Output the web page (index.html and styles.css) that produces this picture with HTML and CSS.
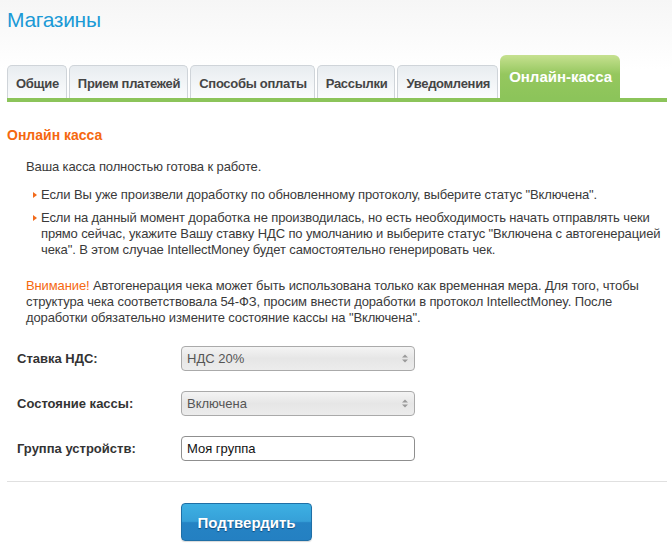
FILE: index.html
```html
<!DOCTYPE html>
<html lang="ru">
<head>
<meta charset="utf-8">
<title>Магазины</title>
<link rel="stylesheet" href="styles.css">
</head>
<body>
<div class="page">
  <h1 class="title">Магазины</h1>
  <ul class="tabs">
    <li class="tab">Общие</li>
    <li class="tab">Прием платежей</li>
    <li class="tab">Способы оплаты</li>
    <li class="tab">Рассылки</li>
    <li class="tab">Уведомления</li>
    <li class="tab active">Онлайн-касса</li>
  </ul>
  <h2 class="section-title">Онлайн касса</h2>
  <div class="intro">
    <p class="ready">Ваша касса полностью готова к работе.</p>
    <ul class="bullets">
      <li>Если Вы уже произвели доработку по обновленному протоколу, выберите статус "Включена".</li>
      <li>Если на данный момент доработка не производилась, но есть необходимость начать отправлять чеки прямо сейчас, укажите Вашу ставку НДС по умолчанию и выберите статус "Включена с автогенерацией чека". В этом случае IntellectMoney будет самостоятельно генерировать чек.</li>
    </ul>
    <p class="warning"><span class="attention">Внимание!</span> Автогенерация чека может быть использована только как временная мера. Для того, чтобы структура чека соответствовала 54-ФЗ, просим внести доработки в протокол IntellectMoney. После доработки обязательно измените состояние кассы на "Включена".</p>
  </div>
  <form class="form">
    <div class="row">
      <label class="label">Ставка НДС:</label>
      <div class="select-wrap">
        <select class="select"><option>НДС 20%</option></select>
        <svg class="arrows" width="6" height="9" viewBox="0 0 6 9"><path d="M0 3.5 L3 0.5 L6 3.5Z M0 5.5 L3 8.5 L6 5.5Z" fill="#9a9a9a"/></svg>
      </div>
    </div>
    <div class="row">
      <label class="label">Состояние кассы:</label>
      <div class="select-wrap">
        <select class="select"><option>Включена</option></select>
        <svg class="arrows" width="6" height="9" viewBox="0 0 6 9"><path d="M0 3.5 L3 0.5 L6 3.5Z M0 5.5 L3 8.5 L6 5.5Z" fill="#9a9a9a"/></svg>
      </div>
    </div>
    <div class="row">
      <label class="label">Группа устройств:</label>
      <input class="input" type="text" value="Моя группа">
    </div>
    <hr class="divider">
    <div class="actions">
      <button type="button" class="btn">Подтвердить</button>
    </div>
  </form>
</div>
</body>
</html>
```

FILE: styles.css
```css
html, body {
  margin: 0;
  padding: 0;
}
body {
  font-family: "Liberation Sans", Arial, sans-serif;
  font-size: 13px;
  color: #3a3a3a;
  background: linear-gradient(#f6f6f6, #ffffff 70px);
  min-height: 556px;
}
.page {
  padding: 0 5px 0 7px;
}
.title {
  margin: 8px 0 0;
  font-size: 21px;
  line-height: 24px;
  font-weight: normal;
  color: #1b9ad6;
  letter-spacing: -0.3px;
}
.tabs {
  list-style: none;
  margin: 23px 0 0;
  padding: 0;
  display: flex;
  align-items: flex-end;
  gap: 2px;
  border-bottom: 4px solid #8cc45a;
}
.tab {
  font-size: 13px;
  line-height: 15px;
  font-weight: bold;
  color: #454545;
  letter-spacing: -0.3px;
  padding: 10px 7px 7px 8px;
  border: 1px solid #cfd4d9;
  border-bottom: none;
  border-radius: 5px 5px 0 0;
  background: linear-gradient(#e8ecf0, #fbfcfd);
}
.tab.active {
  font-size: 15px;
  line-height: 17px;
  color: #fff;
  letter-spacing: 0;
  padding: 13px 8px 13px 9px;
  border: none;
  border-radius: 6px 6px 0 0;
  background: linear-gradient(#c6e190, #95c75e 45%, #8cc45a);
}
.section-title {
  margin: 25px 0 0;
  font-size: 14px;
  line-height: 16px;
  font-weight: bold;
  color: #f5680f;
}
.intro {
  padding-left: 19px;
  line-height: 16px;
  letter-spacing: -0.12px;
}
.ready {
  margin: 16px 0 0;
}
.bullets {
  list-style: none;
  margin: 12px 0 0;
  padding: 0 0 0 15px;
}
.bullets li {
  position: relative;
  margin-bottom: 7px;
}
.bullets li::before {
  content: "";
  position: absolute;
  left: -8px;
  top: 5px;
  border-left: 4px solid #f26a1b;
  border-top: 3px solid transparent;
  border-bottom: 3px solid transparent;
}
.warning {
  margin: 20px 0 0;
}
.attention {
  color: #f5680f;
}
.form {
  margin-top: 20px;
}
.row {
  display: flex;
  align-items: center;
  margin-bottom: 20px;
}
.label {
  width: 174px;
  padding-left: 10px;
  box-sizing: border-box;
  font-weight: bold;
  color: #333;
}
.select-wrap {
  position: relative;
  width: 234px;
  height: 25px;
}
.select {
  appearance: none;
  -webkit-appearance: none;
  width: 100%;
  height: 25px;
  box-sizing: border-box;
  border: 1px solid #aaaaaa;
  border-radius: 4px;
  background: linear-gradient(#f4f4f4, #e6e6e6 50%, #ececec);
  font-family: "Liberation Sans", Arial, sans-serif;
  font-size: 13px;
  color: #555;
  padding: 0 5px;
  margin: 0;
}
.arrows {
  position: absolute;
  right: 7px;
  top: 8px;
  pointer-events: none;
}
.input {
  width: 234px;
  height: 25px;
  box-sizing: border-box;
  border: 1px solid #8f8f8f;
  border-radius: 4px;
  background: #fff;
  font-family: "Liberation Sans", Arial, sans-serif;
  font-size: 13px;
  color: #111;
  padding: 0 5px;
  margin: 0;
}
.divider {
  border: none;
  border-top: 1px solid #e0e0e0;
  margin: 0;
}
.actions {
  padding: 21px 0 0 174px;
}
.btn {
  width: 131px;
  height: 38px;
  border: 1px solid #1f6fa6;
  border-radius: 4px;
  background: linear-gradient(#3db0e3, #36a0d8 48%, #2583c4 52%, #2480c2);
  color: #fff;
  font-family: "Liberation Sans", Arial, sans-serif;
  font-size: 15px;
  font-weight: bold;
  text-shadow: 0 1px 1px rgba(0, 40, 80, 0.6);
  box-shadow: 0 1px 1px rgba(0,0,0,0.15);
  padding: 0;
  margin: 0;
}
```
